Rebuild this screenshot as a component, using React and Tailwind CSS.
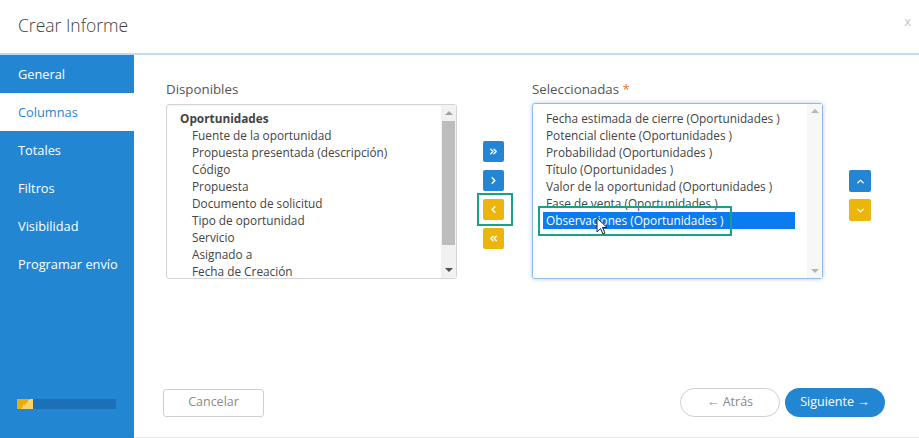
import { ChevronUp, ChevronDown, ChevronLeft, ChevronRight, ChevronsLeft, ChevronsRight } from "lucide-react";

const menu = ["General", "Columnas", "Totales", "Filtros", "Visibilidad", "Programar envío"];

const available = [
    "Fuente de la oportunidad",
    "Propuesta presentada (descripción)",
    "Código",
    "Propuesta",
    "Documento de solicitud",
    "Tipo de oportunidad",
    "Servicio",
    "Asignado a",
    "Fecha de Creación",
];

const selected = [
    "Fecha estimada de cierre (Oportunidades )",
    "Potencial cliente (Oportunidades )",
    "Probabilidad (Oportunidades )",
    "Título (Oportunidades )",
    "Valor de la oportunidad (Oportunidades )",
    "Fase de venta (Oportunidades )",
    "Observaciones (Oportunidades )",
];

function ScrollArrows({ thumb }) {
    return (
        <div className="flex w-[15px] flex-col items-center bg-[#f1f1f1]">
            <div className="flex h-[16px] items-center justify-center">
                <div className="h-0 w-0 border-x-[4px] border-b-[4px] border-x-transparent border-b-[#a3a3a3]" />
            </div>
            <div className="flex-1 w-[13px]">
                {thumb && <div className="h-[124px] w-full bg-[#bdbdbd]" />}
            </div>
            <div className="flex h-[16px] items-center justify-center">
                <div className="h-0 w-0 border-x-[4px] border-t-[4px] border-x-transparent border-t-[#505050]" />
            </div>
        </div>
    );
}

function MoveButton({ color, children, outlined }) {
    return (
        <div className="relative">
            <button
                className={`flex h-[21px] w-[21px] items-center justify-center rounded-[2px] text-white ${
                    color === "blue" ? "bg-[#2385d4]" : "bg-[#ebb50c]"
                }`}
            >
                {children}
            </button>
            {outlined && (
                <div className="absolute left-[-6px] top-[-6px] h-[33px] w-[36px] border-[2px] border-[#17a287]" />
            )}
        </div>
    );
}

export default function App() {
    return (
        <div
            className="flex h-[438px] w-[919px] flex-col bg-white text-[#555]"
            style={{ fontFamily: '"Open Sans", "Liberation Sans", sans-serif' }}
        >
            <div className="flex h-[55px] shrink-0 items-center justify-between border-b-[2px] border-[#bcdcf2] pl-[18px] pr-[8px]">
                <h1 className="pb-[2px] text-[17.5px] font-light text-[#3f3f3f]">Crear Informe</h1>
                <span className="mb-[10px] text-[13px] text-[#c4c4c4]">x</span>
            </div>

            <div className="flex flex-1">
                <nav className="flex w-[134px] flex-col bg-[#2386d3]">
                    {menu.map((item) => (
                        <div
                            key={item}
                            className={`flex h-[38.2px] items-center pl-[18px] text-[12.8px] ${
                                item === "Columnas" ? "bg-white text-[#2386d3]" : "text-white"
                            }`}
                        >
                            {item}
                        </div>
                    ))}
                    <div className="mt-auto mb-[29px] ml-[17px] flex h-[10px] w-[99px] bg-[#1b70b7]">
                        <div className="h-full w-[16px] bg-[linear-gradient(135deg,#e9ad0a_50%,#f7d46b_50%)]" />
                    </div>
                </nav>

                <main className="relative flex flex-1 flex-col border-b border-[#e6e6e6] pl-[32px]">
                    <div className="flex pt-[24px]">
                        <div className="w-[291px]">
                            <div className="mb-[5px] text-[13.3px] leading-[20px]">Disponibles</div>
                            <div className="flex h-[175px] rounded-[3px] border border-[#d4d4d4] shadow-[inset_0_1px_2px_rgba(0,0,0,0.06)]">
                                <div className="flex-1 overflow-hidden pl-[13px] pt-[5px] text-[11.8px] leading-[17px] text-[#444]">
                                    <div className="font-bold">Oportunidades</div>
                                    {available.map((a) => (
                                        <div key={a} className="pl-[12px]">
                                            {a}
                                        </div>
                                    ))}
                                </div>
                                <ScrollArrows thumb />
                            </div>
                        </div>

                        <div className="ml-[26px] mt-[62px] flex flex-col gap-[8px]">
                            <MoveButton color="blue">
                                <ChevronsRight size={11} strokeWidth={3} />
                            </MoveButton>
                            <MoveButton color="blue">
                                <ChevronRight size={11} strokeWidth={3} />
                            </MoveButton>
                            <MoveButton color="yellow" outlined>
                                <ChevronLeft size={11} strokeWidth={3} />
                            </MoveButton>
                            <MoveButton color="yellow">
                                <ChevronsLeft size={11} strokeWidth={3} />
                            </MoveButton>
                        </div>

                        <div className="ml-[28px] w-[291px]">
                            <div className="mb-[4px] text-[13.3px] leading-[20px]">
                                Seleccionadas <span className="text-[#e8733a]">*</span>
                            </div>
                            <div className="flex h-[176px] rounded-[3px] border border-[#8fbde8] shadow-[0_0_4px_rgba(70,140,220,0.45)]">
                                <div className="relative flex-1 pl-[10px] pr-[12px] pt-[6px] text-[11.8px] leading-[17px] text-[#444]">
                                    {selected.map((s) =>
                                        s.startsWith("Observaciones") ? (
                                            <div key={s} className="relative">
                                                <div className="bg-[#0a7cf0] pl-[3px] text-white">{s}</div>
                                                <div className="absolute left-[-5px] top-[-6px] h-[30px] w-[194px] border-[2px] border-[#17a287]" />
                                                <svg
                                                    className="absolute left-[53px] top-[5px]"
                                                    width="13"
                                                    height="19"
                                                    viewBox="0 0 13 19"
                                                >
                                                    <path
                                                        d="M1 1 L1 15 L4.5 11.5 L7 17 L9 16 L6.5 10.5 L11 10.5 Z"
                                                        fill="#fff"
                                                        stroke="#222"
                                                        strokeWidth="1"
                                                        strokeLinejoin="round"
                                                    />
                                                </svg>
                                            </div>
                                        ) : (
                                            <div key={s} className="pl-[3px]">
                                                {s}
                                            </div>
                                        )
                                    )}
                                </div>
                                <div className="flex w-[15px] flex-col items-center justify-between bg-[#f7f7f7] py-[5px]">
                                    <div className="h-0 w-0 border-x-[4px] border-b-[4px] border-x-transparent border-b-[#b5b5b5]" />
                                    <div className="h-0 w-0 border-x-[4px] border-t-[4px] border-x-transparent border-t-[#b5b5b5]" />
                                </div>
                            </div>
                        </div>

                        <div className="ml-[26px] mt-[91px] flex flex-col gap-[7px]">
                            <button className="flex h-[22px] w-[22px] items-center justify-center rounded-[2px] bg-[#2385d4] text-white">
                                <ChevronUp size={11} strokeWidth={3} />
                            </button>
                            <button className="flex h-[22px] w-[22px] items-center justify-center rounded-[2px] bg-[#ebb50c] text-white">
                                <ChevronDown size={11} strokeWidth={3} />
                            </button>
                        </div>
                    </div>

                    <div className="mt-auto flex items-center pb-[20px]">
                        <button className="ml-[-3px] h-[28px] w-[101px] rounded-[3px] border border-[#cfcfcf] text-[12.5px] text-[#8a8a8a]">
                            Cancelar
                        </button>
                        <div className="ml-auto mr-[34px] flex gap-[5px]">
                            <button className="h-[29px] w-[100px] rounded-full border border-[#cfcfcf] text-[12.5px] text-[#8a8a8a]">
                                ←&nbsp;Atrás
                            </button>
                            <button className="h-[29px] w-[100px] rounded-full bg-[#2386d3] text-[12.5px] text-white">
                                Siguiente&nbsp;→
                            </button>
                        </div>
                    </div>
                </main>
            </div>
        </div>
    );
}
